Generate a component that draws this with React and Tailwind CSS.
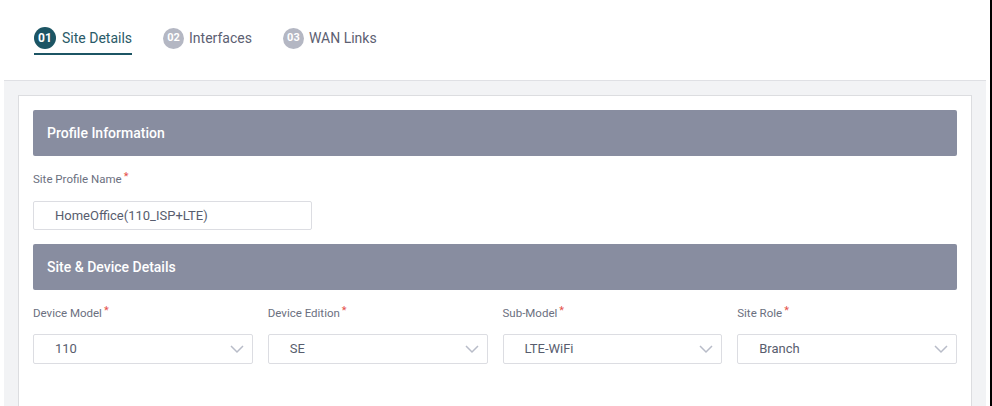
import React from "react";

function Chevron() {
  return (
    <svg width="16" height="10" viewBox="0 0 16 10" fill="none">
      <path d="M2 2l6 6 6-6" stroke="#b8bcc8" strokeWidth="1.5" />
    </svg>
  );
}

function Label({ children }) {
  return (
    <div className="text-[11.5px] text-[#6b7080] leading-none h-[14px] flex items-start">
      {children}
      <span className="text-[#e5504a] ml-[2px] text-[11px] -mt-[3px]">*</span>
    </div>
  );
}

function Select({ label, value }) {
  return (
    <div className="flex flex-col">
      <Label>{label}</Label>
      <div className="mt-[12px] h-[30px] border border-[#dcdde2] rounded-[2px] flex items-center justify-between pl-[21px] pr-[7px]">
        <span className="text-[13px] text-[#585d6e]">{value}</span>
        <Chevron />
      </div>
    </div>
  );
}

function Tab({ num, label, active }) {
  return (
    <div className="flex flex-col">
      <div className={"flex items-center h-[22px] " + (active ? "gap-[6px]" : "gap-[5px]")}>
        <span
          className={
            "rounded-full flex items-center justify-center font-bold text-white " +
            (active ? "bg-[#1c5564] w-[22px] h-[22px] text-[12px]" : "bg-[#b4b7c3] w-[21px] h-[21px] text-[11px]")
          }
        >
          {num}
        </span>
        <span className={"text-[14px] " + (active ? "text-[#2a5a68]" : "text-[#5c6072]")}>{label}</span>
      </div>
      <div className={"mt-[4px] h-[2px] " + (active ? "bg-[#1c5564]" : "bg-transparent")} />
    </div>
  );
}

export default function App() {
  return (
    <div className="w-[992px] h-[406px] overflow-hidden bg-white flex" style={{ fontFamily: "Roboto, 'Noto Sans', sans-serif" }}>
      <div className="flex-1 flex flex-col pl-[4px] pr-[4px]">
        <div className="h-[81px] flex items-start pt-[27px] pl-[30px] gap-[31px] border-b border-[#dfe0e4]">
          <Tab num="01" label="Site Details" active />
          <Tab num="02" label="Interfaces" />
          <Tab num="03" label="WAN Links" />
        </div>
        <div className="flex-1 bg-[#f2f3f5] pt-[14px] pl-[14px] pr-[14px]">
          <div className="h-full bg-white border border-[#dcdde0] border-b-0 pt-[14px] px-[14px]">
            <div className="h-[46px] bg-[#888da0] rounded-[2px] flex items-center px-[14px]">
              <span className="text-white text-[14px] font-medium">Profile Information</span>
            </div>
            <div className="pt-[18px]">
              <Label>Site Profile Name</Label>
              <div className="mt-[13px] w-[279px] h-[29px] border border-[#dcdde2] rounded-[2px] flex items-center pl-[21px]">
                <span className="text-[13px] text-[#585d6e]">HomeOffice(110_ISP+LTE)</span>
              </div>
            </div>
            <div className="mt-[14px] h-[46px] bg-[#888da0] rounded-[2px] flex items-center px-[14px]">
              <span className="text-white text-[14px] font-medium">Site &amp; Device Details</span>
            </div>
            <div className="pt-[18px] grid grid-cols-4 gap-x-[15px]">
              <Select label="Device Model" value="110" />
              <Select label="Device Edition" value="SE" />
              <Select label="Sub-Model" value="LTE-WiFi" />
              <Select label="Site Role" value="Branch" />
            </div>
          </div>
        </div>
      </div>
      <div className="w-[2px] bg-black" />
    </div>
  );
}
